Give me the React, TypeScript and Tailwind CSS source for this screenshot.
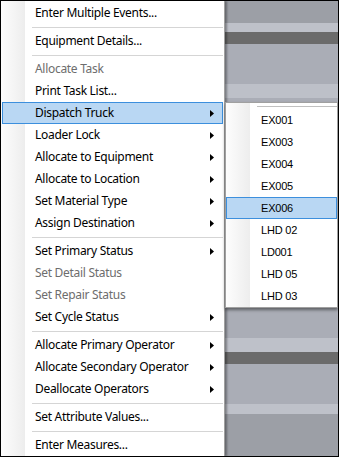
import React from "react";

type Item = { label: string; arrow?: boolean; disabled?: boolean; active?: boolean } | "sep";

const menuItems: Item[] = [
  { label: "Enter Multiple Events..." },
  "sep",
  { label: "Equipment Details..." },
  "sep",
  { label: "Allocate Task", disabled: true },
  { label: "Print Task List..." },
  { label: "Dispatch Truck", arrow: true, active: true },
  { label: "Loader Lock", arrow: true },
  { label: "Allocate to Equipment", arrow: true },
  { label: "Allocate to Location", arrow: true },
  { label: "Set Material Type", arrow: true },
  { label: "Assign Destination", arrow: true },
  "sep",
  { label: "Set Primary Status", arrow: true },
  { label: "Set Detail Status", disabled: true },
  { label: "Set Repair Status", disabled: true },
  { label: "Set Cycle Status", arrow: true },
  "sep",
  { label: "Allocate Primary Operator", arrow: true },
  { label: "Allocate Secondary Operator", arrow: true },
  { label: "Deallocate Operators", arrow: true },
  "sep",
  { label: "Set Attribute Values..." },
  "sep",
  { label: "Enter Measures..." },
];

const trucks = ["EX001", "EX003", "EX004", "EX005", "EX006", "LHD 02", "LD001", "LHD 05", "LHD 03"];

function Arrow() {
  return (
    <svg width="4" height="7" viewBox="0 0 4 7" className="ml-auto shrink-0">
      <path d="M0 0L4 3.5L0 7Z" fill="#000" />
    </svg>
  );
}

function MainMenu() {
  return (
    <div className="relative z-10 w-[224px] shrink-0 border-r border-[#a0a0a0] pt-px shadow-[2px_0_2px_rgba(0,0,0,0.35)] bg-[linear-gradient(to_right,#fdfdfd_0px,#ededed_24px,#ffffff_24px)]">
      {menuItems.map((item, i) =>
        item === "sep" ? (
          <div key={i} className="h-[6px] flex items-center pl-[31px] pr-px">
            <div className="h-px flex-1 bg-[#d5d5d5]" />
          </div>
        ) : (
          <div
            key={i}
            className={
              item.active
                ? "mx-px h-[22px] flex items-center border border-[#3c8fdd] bg-[#b9d7f3] pl-[32px] pr-[8px]"
                : "mx-px h-[22px] flex items-center border border-transparent pl-[32px] pr-[8px]"
            }
          >
            <span className={item.disabled ? "text-[#6d6d6d]" : "text-black"}>{item.label}</span>
            {item.arrow && <Arrow />}
          </div>
        )
      )}
    </div>
  );
}

function SubMenu() {
  return (
    <div className="relative z-20 h-[206px] shrink-0 border border-[#a0a0a0] shadow-[0_2px_3px_rgba(0,0,0,0.45)] bg-[linear-gradient(to_right,#fdfdfd_0px,#ededed_24px,#ffffff_24px)] font-['Liberation_Sans',Arial,sans-serif] text-[11px] tracking-[-0.2px]">
      <div className="h-[6px] flex items-center pl-[31px]">
        <div className="h-px flex-1 bg-[#c0c0c0]" />
      </div>
      {trucks.map((t) => (
        <div
          key={t}
          className={
            t === "EX006"
              ? "h-[22px] flex items-center border border-[#3c8fdd] bg-[#b9d7f3] pl-[34px] text-black"
              : "h-[22px] flex items-center border border-transparent pl-[34px] text-black"
          }
        >
          {t}
        </div>
      ))}
    </div>
  );
}

export default function App() {
  return (
    <div className="w-[339px] h-[457px] border border-black flex overflow-hidden bg-white font-['Noto_Sans','Open_Sans',sans-serif] text-[12px] tracking-[-0.3px]">
      <MainMenu />
      <div className="flex-1 flex flex-col">
        <div className="h-[22px] bg-[#9c9fa6]" />
        <div className="h-[9px] bg-[#bec1c9]" />
        <div className="h-[12px] bg-[#6b6b6b]" />
        <div className="h-[40px] bg-[#aaadb6]" />
        <div className="h-[14px] bg-[#bdc0c8]" />
        <div className="h-[4px] bg-[#aaadb6]" />
        <SubMenu />
        <div className="h-[30px] bg-[#aaadb6]" />
        <div className="h-[14px] bg-[#bec1c9]" />
        <div className="h-[12px] bg-[#6b6b6b]" />
        <div className="h-[40px] bg-[#aaadb6]" />
        <div className="h-[10px] bg-[#bec1c9]" />
        <div className="flex-1 bg-[#9c9fa6]" />
      </div>
    </div>
  );
}
